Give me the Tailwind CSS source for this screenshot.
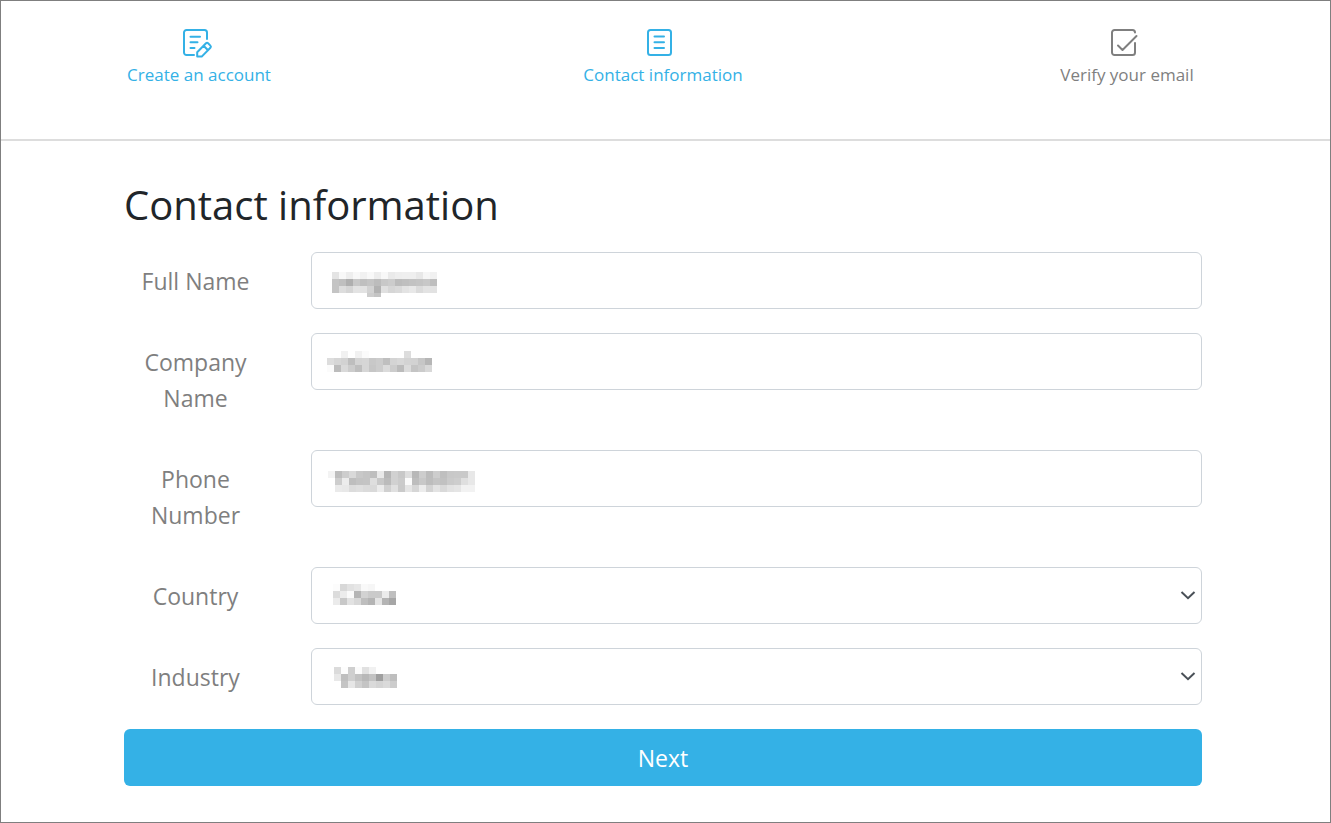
<!DOCTYPE html>
<html lang="en">
<head>
<meta charset="utf-8">
<meta name="viewport" content="width=device-width, initial-scale=1">
<title>Contact information</title>
<script src="https://cdn.jsdelivr.net/npm/@tailwindcss/browser@4"></script>
</head>
<body class="bg-white font-['Open_Sans','Noto_Sans',sans-serif] text-[#212529]">
<div class="min-h-screen border border-[#7f7f7f]">
  <header class="border-b-2 border-[#dddddd] pt-[26px] pb-[50px] pl-[123px] pr-[128px]">
    <ol class="flex justify-between text-[17px] leading-7 whitespace-nowrap text-[#34b1e6]">
      <li class="flex w-[150px] flex-col items-center gap-[2px]">
        <svg class="h-8 w-8" viewBox="0 0 32 32" fill="none" stroke="currentColor" stroke-width="2" stroke-linecap="round" stroke-linejoin="round" aria-hidden="true">
          <path d="M24 12V5.500A2.500 2.500 0 0 0 21.500 3H3.500A2.500 2.500 0 0 0 1 5.500v20A2.500 2.500 0 0 0 3.500 28H11M7.500 9.800h9.500M7.500 15.300h7M7.500 21h4"/>
          <path d="M14.200 25.300 23 16.300a1.500 1.500 0 0 1 2.100 0l2.300 2.300a1.500 1.500 0 0 1 0 2.100L18.700 29.600H14.200zM20.600 18.800l4.200 4.200"/>
        </svg>
        <span>Create an account</span>
      </li>
      <li class="flex w-[150px] flex-col items-center gap-[2px]" aria-current="step">
        <svg class="h-8 w-8" viewBox="0 0 32 32" fill="none" stroke="currentColor" stroke-width="2" stroke-linecap="round" aria-hidden="true">
          <rect x="1" y="3" width="23" height="25" rx="2.500"/>
          <path d="M7.500 9.500h9.500M7.500 15.200h9.500M7.500 21h9.500"/>
        </svg>
        <span>Contact information</span>
      </li>
      <li class="flex w-[150px] flex-col items-center gap-[2px] text-[#7f7f7f]">
        <svg class="h-8 w-8" viewBox="0 0 32 32" fill="none" stroke="currentColor" stroke-width="2" stroke-linecap="round" stroke-linejoin="round" aria-hidden="true">
          <path d="M24 5.500A2.500 2.500 0 0 0 21.500 3h-18A2.500 2.500 0 0 0 1 5.500v20A2.500 2.500 0 0 0 3.500 28h18a2.500 2.500 0 0 0 2.500-2.500V16M7 18.500l4.500 4.500L25.500 9"/>
        </svg>
        <span>Verify your email</span>
      </li>
    </ol>
  </header>

  <main class="pt-9 pb-9 pl-[123px] pr-[128px]">
    <h1 class="mb-5 text-[40px] leading-[55px]">Contact information</h1>
    <form class="flex flex-col gap-6 text-[23px] leading-9">
      <div class="flex items-start gap-11">
        <label for="name" class="w-[143px] shrink-0 pt-[11px] pb-[10px] text-center text-[#7f7f7f]">Full Name</label>
        <div class="relative flex-1">
          <input id="name" type="text" class="block h-[57px] w-full rounded-md border border-[#ced4da] px-4">
          <svg class="pointer-events-none absolute top-[20px] left-[21px]" data-mosaic="name" aria-hidden="true"></svg>
        </div>
      </div>
      <div class="flex items-start gap-11">
        <label for="company" class="w-[143px] shrink-0 pt-[11px] pb-[10px] text-center text-[#7f7f7f]">Company Name</label>
        <div class="relative flex-1">
          <input id="company" type="text" class="block h-[57px] w-full rounded-md border border-[#ced4da] px-4">
          <svg class="pointer-events-none absolute top-[18px] left-[16px]" data-mosaic="company" aria-hidden="true"></svg>
        </div>
      </div>
      <div class="flex items-start gap-11">
        <label for="phone" class="w-[143px] shrink-0 pt-[11px] pb-[10px] text-center text-[#7f7f7f]">Phone Number</label>
        <div class="relative flex-1">
          <input id="phone" type="tel" class="block h-[57px] w-full rounded-md border border-[#ced4da] px-4">
          <svg class="pointer-events-none absolute top-[21px] left-[17px]" data-mosaic="phone" aria-hidden="true"></svg>
        </div>
      </div>
      <div class="flex items-start gap-11">
        <label for="country" class="w-[143px] shrink-0 pt-[11px] pb-[10px] text-center text-[#7f7f7f]">Country</label>
        <div class="relative flex-1">
          <select id="country" class="block h-[57px] w-full appearance-none rounded-md border border-[#ced4da] px-4"><option></option></select>
          <svg class="pointer-events-none absolute top-[17px] left-[22px]" data-mosaic="country" aria-hidden="true"></svg>
          <svg class="pointer-events-none absolute top-5 right-[6px] h-4 w-4" viewBox="0 0 16 16" fill="none" stroke="#495057" stroke-width="2" aria-hidden="true"><path d="M1.500 5 8 11.200 14.500 5"/></svg>
        </div>
      </div>
      <div class="flex items-start gap-11">
        <label for="industry" class="w-[143px] shrink-0 pt-[11px] pb-[10px] text-center text-[#7f7f7f]">Industry</label>
        <div class="relative flex-1">
          <select id="industry" class="block h-[57px] w-full appearance-none rounded-md border border-[#ced4da] px-4"><option></option></select>
          <svg class="pointer-events-none absolute top-[19px] left-[23px]" data-mosaic="industry" aria-hidden="true"></svg>
          <svg class="pointer-events-none absolute top-5 right-[6px] h-4 w-4" viewBox="0 0 16 16" fill="none" stroke="#495057" stroke-width="2" aria-hidden="true"><path d="M1.500 5 8 11.200 14.500 5"/></svg>
        </div>
      </div>
      <button type="button" class="h-[57px] w-full rounded-md bg-[#34b1e6] text-white">Next</button>
    </form>
  </main>
</div>
<script>
// Grey levels (hex) of the 7px blocks that obscure each private value, row by row.
const mosaics = {
  name: ["e4 f8 ee f8 f1 f8 ed f8 ea ee ef ef e8 f6 f1",
         "c4 bf af c8 bf c4 bc c8 cc bc bf c2 c4 c8 be",
         "c4 dd d5 e3 e2 d2 b2 e0 d6 da e3 e8 db e3 e2",
         "ff ff ff ff ff cd c4"],
  company: ["ff ff f1 ff f1 fb ff ff ff ff ff dd",
            "dd d6 d2 be d4 d6 c8 cc bf d4 d8 d3 d2 c6 b6",
            "fb bc d9 cc be d6 c6 cc db cc bb db c4 cb d8"],
  phone: ["f3 bd cd d9 c8 c4 be e9 b6 d1 c8 de b8 cd bc cd bf c8 c9 c9 e8",
          "ff cd ec be c3 c4 de c8 bb d1 cb fb bd c8 bd c4 c1 ca cd df e8",
          "ff ea e8 dc df db d9 eb d0 e0 ca e5 d6 ec d3 e3 d9 e2 e5 f2 f2"],
  country: ["fc d8 e2 e7 f9 f6",
            "dc ec fa b5 d2 ca ca ec bf",
            "eb c8 e2 d8 be b4 e4 b4 a6"],
  industry: ["db fd cf fb e1 f1",
             "e8 bf cf c2 b8 c2 9f cc be",
             "ff c4 e6 d0 c4 da d4 da cc"]
};
document.querySelectorAll("[data-mosaic]").forEach(svg => {
  const rows = mosaics[svg.dataset.mosaic].map(r => r.split(" "));
  svg.setAttribute("width", 7 * Math.max(...rows.map(r => r.length)));
  svg.setAttribute("height", rows.length === 4 ? 25 : 21);
  svg.setAttribute("shape-rendering", "crispEdges");
  svg.innerHTML = rows.map((r, y) => r.map((c, x) =>
    c === "ff" ? "" : `<rect x="${x * 7}" y="${y * 7}" width="7" height="7" fill="#${c}${c}${c}"/>`).join("")).join("");
});
</script>
</body>
</html>
